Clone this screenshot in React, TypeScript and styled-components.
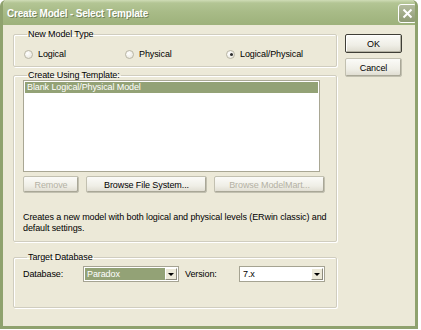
import React from "react";
import styled, { createGlobalStyle } from "styled-components";

const Global = createGlobalStyle`
  html, body { margin: 0; padding: 0; background: #ffffff; }
  body { font-family: "Liberation Sans", Arial, sans-serif; }
  * { box-sizing: border-box; }
`;

const FONT = `
  font-family: "Liberation Sans", Arial, sans-serif;
  font-size: 9px;
  letter-spacing: -0.1px;
`;

const Window = styled.div`
  width: 418px;
  height: 329px;
  display: flex;
  flex-direction: column;
  background: #ece9d8;
  border: 3px solid #8fa26e;
  border-top: none;
  border-radius: 6px 6px 0 0;
  overflow: hidden;
`;

const TitleBar = styled.div`
  height: 25px;
  margin: 0 -3px;
  display: flex;
  align-items: center;
  justify-content: space-between;
  padding: 2px 1px 0 7px;
  background: linear-gradient(#cfdcb6 0px, #b3c594 3px, #a8bb87 12px, #9eb27c 24px);
`;

const Title = styled.span`
  font-family: "Liberation Sans", Arial, sans-serif;
  font-weight: bold;
  font-size: 10px;
  letter-spacing: -0.2px;
  color: #ffffff;
  text-shadow: 1px 1px 0 #74845a;
`;

const CloseButton = styled.div`
  width: 19px;
  height: 19px;
  border: 1px solid #ffffff;
  border-radius: 3px;
  background: linear-gradient(#b4bc9e, #8e9a74);
  display: flex;
  align-items: center;
  justify-content: center;
`;

const Body = styled.div`
  flex: 1;
  display: flex;
  gap: 8px;
  padding: 4px 0 0 10px;
`;

const LeftColumn = styled.div`
  width: 324px;
  display: flex;
  flex-direction: column;
`;

const RightColumn = styled.div`
  width: 57px;
  display: flex;
  flex-direction: column;
  gap: 5px;
  padding-top: 5px;
`;

const Group = styled.fieldset<{ $h: number; $mt?: number }>`
  margin: ${(p) => p.$mt ?? 0}px 0 0 0;
  padding: 0 9px;
  height: ${(p) => p.$h}px;
  border: 1px solid #d0cdbf;
  border-radius: 2px;
  box-shadow: inset 1px 1px 0 #ffffff, 1px 1px 0 #ffffff;
  min-width: 0;
`;

const Legend = styled.legend`
  ${FONT}
  color: #000;
  padding: 0 1px;
  margin-left: 4px;
`;

const RadioRow = styled.div`
  display: flex;
  padding-top: 10px;
  padding-left: 1px;
`;

const RadioItem = styled.label`
  width: 102px;
  display: flex;
  align-items: center;
  gap: 5px;
  ${FONT}
  color: #000;
`;

const RadioCircle = styled.span<{ $on?: boolean }>`
  width: 9px;
  height: 9px;
  border-radius: 50%;
  border: 1px solid #b9b6a6;
  background: radial-gradient(circle at 35% 35%, #ffffff, #e4e2d6);
  position: relative;
  &::after {
    content: "";
    display: ${(p) => (p.$on ? "block" : "none")};
    position: absolute;
    left: 2.5px;
    top: 2.5px;
    width: 3px;
    height: 3px;
    border-radius: 50%;
    background: #2d2d2d;
  }
`;

const ListBox = styled.div`
  margin-top: 0;
  width: 297px;
  height: 92px;
  background: #ffffff;
  border: 1px solid #a9a794;
  padding: 1px;
`;

const ListItem = styled.div<{ $sel?: boolean }>`
  height: 11px;
  line-height: 11px;
  padding-left: 2px;
  ${FONT}
  color: ${(p) => (p.$sel ? "#ffffff" : "#000")};
  background: ${(p) => (p.$sel ? "#93a276" : "transparent")};
`;

const ButtonRow = styled.div`
  display: flex;
  gap: 7px;
  margin-top: 4px;
`;

const Button = styled.button<{ $w: number; $h?: number; $disabled?: boolean; $default?: boolean }>`
  width: ${(p) => p.$w}px;
  height: ${(p) => p.$h ?? 17}px;
  ${FONT}
  padding: 0;
  color: ${(p) => (p.$disabled ? "#b4b1a4" : "#000")};
  background: linear-gradient(#fbfbf8, #efeee6 60%, #dedbcf);
  border: 1px solid ${(p) => (p.$default ? "#3f3e36" : "#c2c0b0")};
  box-shadow: ${(p) =>
    p.$default
      ? "inset 1px 1px 0 #ffffff, inset -1px -1px 0 #b4b2a3"
      : "inset -1px -1px 0 #a9a797"};
  border-radius: 2px;
`;

const Description = styled.div`
  margin-top: 19px;
  ${FONT}
  line-height: 11px;
  color: #000;
`;

const DbRow = styled.div`
  display: flex;
  align-items: center;
  padding-top: 4px;
`;

const Combo = styled.div<{ $w: number }>`
  width: ${(p) => p.$w}px;
  height: 16px;
  display: flex;
  align-items: stretch;
  border: 1px solid #a5a392;
  background: #fff;
  padding: 1px;
`;

const ComboValue = styled.div<{ $sel?: boolean }>`
  flex: 1;
  ${FONT}
  line-height: 12px;
  padding-left: 2px;
  color: ${(p) => (p.$sel ? "#ffffff" : "#000")};
  background: ${(p) => (p.$sel ? "#93a276" : "transparent")};
`;

const ComboButton = styled.div`
  width: 12px;
  display: flex;
  align-items: center;
  justify-content: center;
  background: #ece9d8;
  border: 1px solid #ffffff;
  border-right-color: #8d8b7d;
  border-bottom-color: #8d8b7d;
  &::after {
    content: "";
    border-left: 3px solid transparent;
    border-right: 3px solid transparent;
    border-top: 3px solid #000;
  }
`;

const FieldLabel = styled.span<{ $w: number; $pl?: number }>`
  width: ${(p) => p.$w}px;
  padding-left: ${(p) => p.$pl ?? 0}px;
  ${FONT}
  color: #000;
`;

export default function App() {
  return (
    <>
      <Global />
      <Window>
        <TitleBar>
          <Title>Create Model - Select Template</Title>
          <CloseButton>
            <svg width="11" height="11" viewBox="0 0 11 11">
              <path d="M1.5 1.5 L9.5 9.5 M9.5 1.5 L1.5 9.5" stroke="#ffffff" strokeWidth="2" />
            </svg>
          </CloseButton>
        </TitleBar>
        <Body>
          <LeftColumn>
            <Group $h={38}>
              <Legend>New Model Type</Legend>
              <RadioRow>
                <RadioItem><RadioCircle />Logical</RadioItem>
                <RadioItem><RadioCircle />Physical</RadioItem>
                <RadioItem><RadioCircle $on />Logical/Physical</RadioItem>
              </RadioRow>
            </Group>
            <Group $h={172} $mt={3}>
              <Legend>Create Using Template:</Legend>
              <ListBox>
                <ListItem $sel>Blank Logical/Physical Model</ListItem>
              </ListBox>
              <ButtonRow>
                <Button $w={56} $disabled>Remove</Button>
                <Button $w={121}>Browse File System...</Button>
                <Button $w={111} $disabled>Browse ModelMart...</Button>
              </ButtonRow>
              <Description>
                Creates a new model with both logical and physical levels (ERwin classic) and
                default settings.
              </Description>
            </Group>
            <Group $h={56} $mt={10}>
              <Legend>Target Database</Legend>
              <DbRow>
                <FieldLabel $w={60}>Database:</FieldLabel>
                <Combo $w={96}>
                  <ComboValue $sel>Paradox</ComboValue>
                  <ComboButton />
                </Combo>
                <FieldLabel $w={60} $pl={6}>Version:</FieldLabel>
                <Combo $w={86}>
                  <ComboValue>7.x</ComboValue>
                  <ComboButton />
                </Combo>
              </DbRow>
            </Group>
          </LeftColumn>
          <RightColumn>
            <Button $w={57} $h={19} $default>OK</Button>
            <Button $w={57} $h={19}>Cancel</Button>
          </RightColumn>
        </Body>
      </Window>
    </>
  );
}
